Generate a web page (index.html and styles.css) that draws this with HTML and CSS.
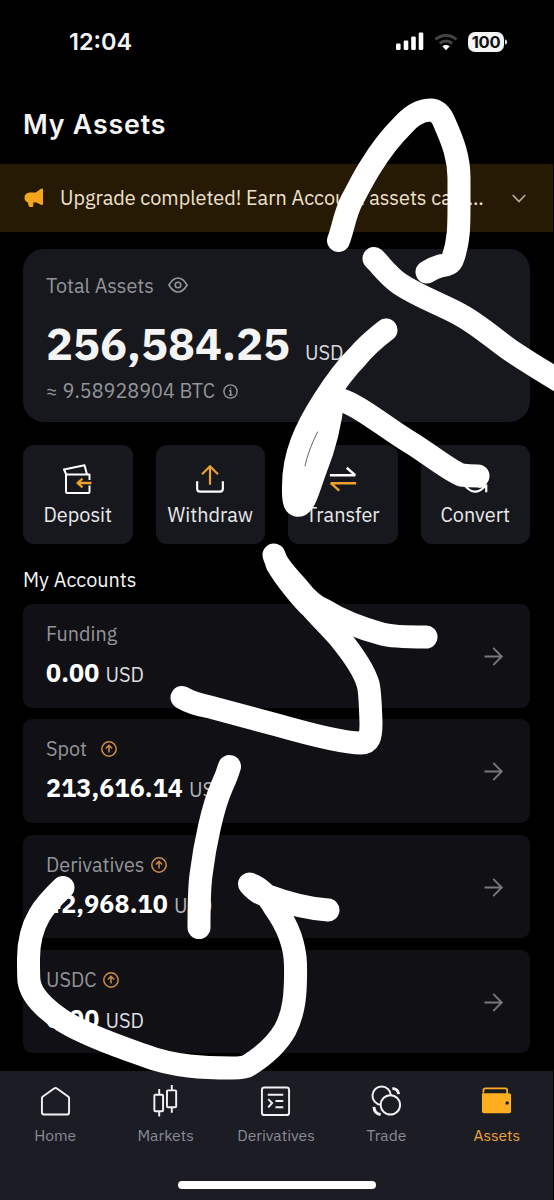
FILE: index.html
```html
<!DOCTYPE html>
<html lang="en">
<head>
<meta charset="utf-8">
<title>My Assets</title>
<link rel="stylesheet" href="styles.css">
</head>
<body>
<div class="app">
  <header class="status">
    <span class="clock">12:04</span>
    <div class="indicators">
      <svg class="signal" width="29" height="19" viewBox="0 0 29 19" fill="#fff"><rect x="1" y="11.500" width="4.600" height="6.500" rx="1.300"/><rect x="8.700" y="8.500" width="4.600" height="9.500" rx="1.300"/><rect x="16.200" y="4.500" width="4.600" height="13.500" rx="1.300"/><rect x="23.700" y="0.500" width="4.600" height="17.500" rx="1.300"/></svg>
      <svg class="wifi" width="24" height="18" viewBox="0 0 24 18" fill="none" stroke="#444" stroke-width="3"><path d="M1.500 6.500a15.500 15.500 0 0 1 21 0M5.700 10.500a9.400 9.400 0 0 1 12.600 0"/><path d="M8.300 13.300q3.700-2.600 7.400 0L12 17.200z" fill="#fff" stroke="none"/></svg>
      <span class="battery">100</span><svg width="4" height="8" viewBox="0 0 4 8"><path d="M1 1.200q2.200.8 2.200 2.800T1 6.800z" fill="#ddd"/></svg>
    </div>
  </header>
  <h1 class="title">My Assets</h1>
  <div class="banner">
    <svg width="20" height="20" viewBox="0 0 20 20" fill="#f5a61d"><path d="M17 .8q2-.8 2 1.200v13.600q0 2-2 1.200L12.500 14.500H9.300v3.300q0 1.200-1.200 1.200H6q-1 0-1.200-1l-.9-3.500Q.5 13.500.5 9.500t4.700-5h6.600z"/></svg>
    <span class="banner-text">Upgrade completed! Earn Account assets can …</span>
    <svg class="chevron" width="14" height="9" viewBox="0 0 14 9" fill="none" stroke="#b7afa1" stroke-width="1.700"><path d="M.8 1 7 7.500 13.200 1"/></svg>
  </div>
  <main>
    <section class="total">
      <div class="total-label">Total Assets <svg width="20" height="16" viewBox="0 0 20 16" fill="none" stroke="#94959a" stroke-width="1.600"><path d="M.9 8Q5 1 10 1t9.100 7Q15 15 10 15T.9 8z"/><circle cx="10" cy="8" r="2.800"/></svg></div>
      <div class="total-value"><strong>256,584.25</strong><span>USD</span></div>
      <div class="btc"><span class="approx">≈</span> 9.58928904 BTC <svg width="15" height="15" viewBox="0 0 15 15" fill="none" stroke="#94959a" stroke-width="1.400"><circle cx="7.500" cy="7.500" r="6.600"/><path d="M6 6.700h1.700V11M5.800 11h3.700M7.500 3.700v1.600"/></svg></div>
    </section>
    <div class="actions">
      <div class="action">
        <svg viewBox="0 0 30 30" fill="none" stroke="#fff" stroke-width="2" stroke-linejoin="round"><path d="M3.500 11 1 5.500 21.500 1.200 24 10.500"/><path d="M26.500 16v-5.500H3V28q0 1 1 1h21.500q1 0 1-1v-6.500"/><path d="M28.500 19H14.500m5-4.300L14.500 19l5 4.300" stroke="#eda12f" stroke-width="2.300"/></svg>
        <span>Deposit</span>
      </div>
      <div class="action">
        <svg viewBox="0 0 32 32" fill="none" stroke="#fff" stroke-width="2.300"><path d="M2.300 18.500v8q0 3 3 3h21.400q3 0 3-3v-8"/><path d="M16 22V2.500M7.500 11 16 2.500l8.500 8.500" stroke="#eda12f"/></svg>
        <span>Withdraw</span>
      </div>
      <div class="action">
        <svg viewBox="0 0 32 32" fill="none" stroke="#fff" stroke-width="2.500" stroke-linejoin="bevel"><path d="M2 12h27L20 4"/><path d="M30 20.500H3l9 8" stroke="#eda12f"/></svg>
        <span>Transfer</span>
      </div>
      <div class="action">
        <svg viewBox="0 0 32 32" fill="none" stroke="#fff" stroke-width="2.300"><path d="M4 21.500q11 15 23 2M20 24.500l8-1.500v7"/><path d="M29 18q2-8-3-13" stroke="#eda12f"/></svg>
        <span>Convert</span>
      </div>
    </div>
    <h2>My Accounts</h2>
    <div class="accounts">
      <div class="account">
        <div><div class="name">Funding</div><div class="amount">0.00 <span>USD</span></div></div>
        <svg class="arrow" viewBox="0 0 20 20"><path d="M.5 10h18M9.700 1l9 9-9 9"/></svg>
      </div>
      <div class="account">
        <div><div class="name">Spot <svg class="up wide" viewBox="0 0 16 16"><circle cx="8" cy="8" r="7.200"/><path d="M8 11.500v-7M4.800 7.500 8 4.300l3.200 3.200"/></svg></div><div class="amount">213,616.14 <span class="dim">USD</span></div></div>
        <svg class="arrow" viewBox="0 0 20 20"><path d="M.5 10h18M9.700 1l9 9-9 9"/></svg>
      </div>
      <div class="account">
        <div><div class="name">Derivatives <svg class="up" viewBox="0 0 16 16"><circle cx="8" cy="8" r="7.200"/><path d="M8 11.500v-7M4.800 7.500 8 4.300l3.200 3.200"/></svg></div><div class="amount">42,968.10 <span class="dim">USD</span></div></div>
        <svg class="arrow" viewBox="0 0 20 20"><path d="M.5 10h18M9.700 1l9 9-9 9"/></svg>
      </div>
      <div class="account">
        <div><div class="name">USDC <svg class="up" viewBox="0 0 16 16"><circle cx="8" cy="8" r="7.200"/><path d="M8 11.500v-7M4.800 7.500 8 4.300l3.200 3.200"/></svg></div><div class="amount">0.00 <span>USD</span></div></div>
        <svg class="arrow" viewBox="0 0 20 20"><path d="M.5 10h18M9.700 1l9 9-9 9"/></svg>
      </div>
    </div>
  </main>
  <nav class="tabs">
    <div class="tab"><svg viewBox="0 0 32 32"><path d="M2 12.500q0-1 1-1.700L14.500 2.600q1.500-1.200 3 0L29 10.800q1 .7 1 1.700V27q0 2.500-2.500 2.500h-23Q2 29.500 2 27z"/></svg><span>Home</span></div>
    <div class="tab"><svg viewBox="0 0 32 32"><rect x="4.500" y="9" width="9" height="17" rx="1"/><rect x="17.500" y="4.500" width="9.500" height="17.500" rx="1"/><path d="M9.500 3v6M9.500 26v5.500M22.500-1v5.500M22.500 22v5.500"/></svg><span>Markets</span></div>
    <div class="tab"><svg viewBox="0 0 32 32"><rect x="2" y="1.500" width="28" height="28.500" rx="2.500"/><path d="M8 9h16M16 15.500h8M16 22h8M8.500 13.500l4 4-4 4.500"/></svg><span>Derivatives</span></div>
    <div class="tab"><svg viewBox="0 0 32 32"><path d="M10 19.500A9.500 9.500 0 1 1 20.500 9.500"/><circle cx="20" cy="19.500" r="10"/><path d="M22 2.500q6 .5 6.500 6M3 21.500q.5 7 7 8" stroke-width="3"/></svg><span>Trade</span></div>
    <div class="tab active"><svg viewBox="0 0 32 32"><path d="M2.500 7V4.500q0-2 2-2H25q2 0 2 2V8" fill="none" stroke="#ffae20" stroke-width="1.800"/><path fill="#ffae20" stroke="none" d="M1 7.500h28q2 0 2 2V26q0 2-2 2H3q-2 0-2-2z"/><circle cx="27" cy="17.500" r="1.800" fill="#1c1c25" stroke="none"/></svg><span>Assets</span></div>
  </nav>
  <div class="home-indicator"></div>
</div>
<svg class="scribble" width="554" height="1200" viewBox="0 0 554 1200">
  <path d="M338.500 240.500C343 229 345 213 352 200S365 175 371 166C382 148 393 135 403 125C411 116 420 110.500 430 110C438 110 442 116 445 124C453 142 459 158 459 178V205C459 226 459 241 453 258C451 265 445 265 440 266Q433 268 427 272"/>
  <path d="M374 258.500C380 264 387 275 400 284C418 296 438 303 457 313C475 322 492 337 510 350Q531 364 566 385"/>
  <path d="M386 330C373 340 366 346 357 357C344 370 333 386 324 400C306 428 293 455 293.500 488Q293 504 297 505C305 507 309 486 316 468C324 448 330 428 333 398C355 401 380 424 408 441C428 453 447 469 461 475Q469 476 478 476"/>
  <path d="M322 405 314 440 300 485"/>
  <path d="M274 555C277 567 289 577 298 588Q311 605 324 610C340 620 360 628 382 634Q392 637 426 637"/>
  <path d="M277 564C285 578 303 600 312 608C320 617 328 625 338 636C352 653 364 670 368 684Q370 690 371 723C371 738 369 743 361 743C345 743 305 733 277 725L210 707Q193 704 182 697.500"/>
  <path d="M229.500 766.500Q227 775 222 786C213 806 205 843 201 875Q199 890 199 927.500"/>
  <path d="M328 910Q300 908 268 896Q258 894 249.500 884C259 887 267 894 275 908C285 922 295 940 295.500 965C296 995 294 1013 285 1030C277 1044 265 1055 249 1065Q245 1068 232 1068C205 1068 174 1067 143 1055C114 1045 84 1034 63 1021C45 1009 31 996 29 981Q28.500 976 28.500 960C28 920 48 902 63 887.500"/>
  <path class="slit" d="M317.500 432Q308 451 305 466"/>
</svg>
</body>
</html>
```
FILE: styles.css
```css
* { box-sizing: border-box; }
body { margin: 0; background: #000; color: #f4f4f5; font-family: "IBM Plex Sans", Roboto, "Noto Sans", sans-serif; }
svg { display: block; flex: none; overflow: visible; }
.app { position: relative; width: 553px; height: 1200px; display: flex; flex-direction: column; overflow: hidden; }
.app > * { flex: none; }

.status { height: 83px; padding: 0 45px 0 69px; display: flex; align-items: center; justify-content: space-between; }
.clock { font: 600 23.5px/28px Inter, sans-serif; letter-spacing: 0; }
.indicators { display: flex; align-items: center; }
.wifi { margin: 0 10px 0 10px; }
.battery { width: 36px; height: 20px; border-radius: 7px; background: #f5f5f5; color: #111; font: 700 16.5px/20px Inter, sans-serif; text-align: center; letter-spacing: -0.3px; }
.title { margin: 24px 0 0 23px; height: 56.700px; font: 600 26.800px/35px Inter, sans-serif; letter-spacing: 0.8px; }

.banner { height: 68px; padding: 1px 27px 0 24px; display: flex; align-items: center; background: #271a05; }
.banner-text { margin-left: 16px; color: #eee2cf; font-size: 19.850px; line-height: 24px; white-space: nowrap; }
.chevron { margin-left: auto; }

main { padding: 17px 23px 0; width: 553px; }
.total { height: 173px; border-radius: 21px; padding: 25px 23px 0; background: #17181d; }
.total-label, .btc, .name { display: flex; align-items: center; color: #94959a; font-size: 19.800px; line-height: 24px; white-space: pre; }
.total-label svg { margin-left: 9px; margin-top: -2px; }
.total-value { display: flex; align-items: baseline; margin-top: 20px; height: 50px; line-height: 50px; }
.total-value strong { font-size: 45px; letter-spacing: 0; }
.total-value span { margin-left: 15px; font-size: 20px; color: #dadadd; }
.btc { margin-top: 11.500px; }
.btc .approx { font-size: 19px; margin-right: 0.5px; }
.btc svg { margin-left: 3.5px; }

.actions { display: grid; grid-template-columns: repeat(4, 109.500px); justify-content: space-between; margin-top: 23px; }
.action { height: 99.500px; border-radius: 11px; background: #17181d; display: flex; flex-direction: column; align-items: center; padding-top: 19px; font-size: 19.900px; line-height: 24px; color: #e9e9eb; }
.action svg { width: 30px; height: 30px; margin-bottom: 9px; }
h2 { margin: 24px 0 12px; font-size: 19.850px; line-height: 24px; font-weight: 400; }
.accounts { display: grid; gap: 11.500px; }
.account { height: 103.700px; border-radius: 9px; background: #101015; padding: 18px 27px 0 23px; display: flex; justify-content: space-between; align-items: flex-start; }
.amount { margin-top: 12px; font-size: 25px; line-height: 30px; font-weight: 700; letter-spacing: 0.15px; white-space: nowrap; color: #fff; }
.amount span { font-size: 20px; font-weight: 400; letter-spacing: 0; color: #dedee0; }
.amount .dim { color: #b3b3b7; }
.arrow { width: 19px; height: 19px; margin-top: 25px; fill: none; stroke: #77777c; stroke-width: 2; }
.up { width: 16px; height: 16px; margin-left: 2px; fill: none; stroke: #cf8c45; stroke-width: 1.500; }
.up.wide { margin-left: 9px; }

.tabs { margin-top: 17.500px; height: 130px; background: #1c1c25; display: grid; grid-template-columns: repeat(5, 110.400px); padding-top: 15px; align-items: start; }
.tab { display: flex; flex-direction: column; align-items: center; font-size: 15.600px; line-height: 20px; color: #8b8b94; }
.tab svg { width: 31px; height: 31px; margin-bottom: 8px; fill: none; stroke: #f1f1f4; stroke-width: 2; }
.tab.active { color: #eda13a; }
.home-indicator { position: absolute; left: 178px; top: 1181px; width: 198px; height: 8px; border-radius: 4px; background: #fff; }

.scribble { position: absolute; left: 0; top: 0; overflow: hidden; fill: none; stroke: #fff; stroke-width: 23; stroke-linecap: round; stroke-linejoin: round; }
.scribble .slit { stroke: #666; stroke-width: 1; }
```
